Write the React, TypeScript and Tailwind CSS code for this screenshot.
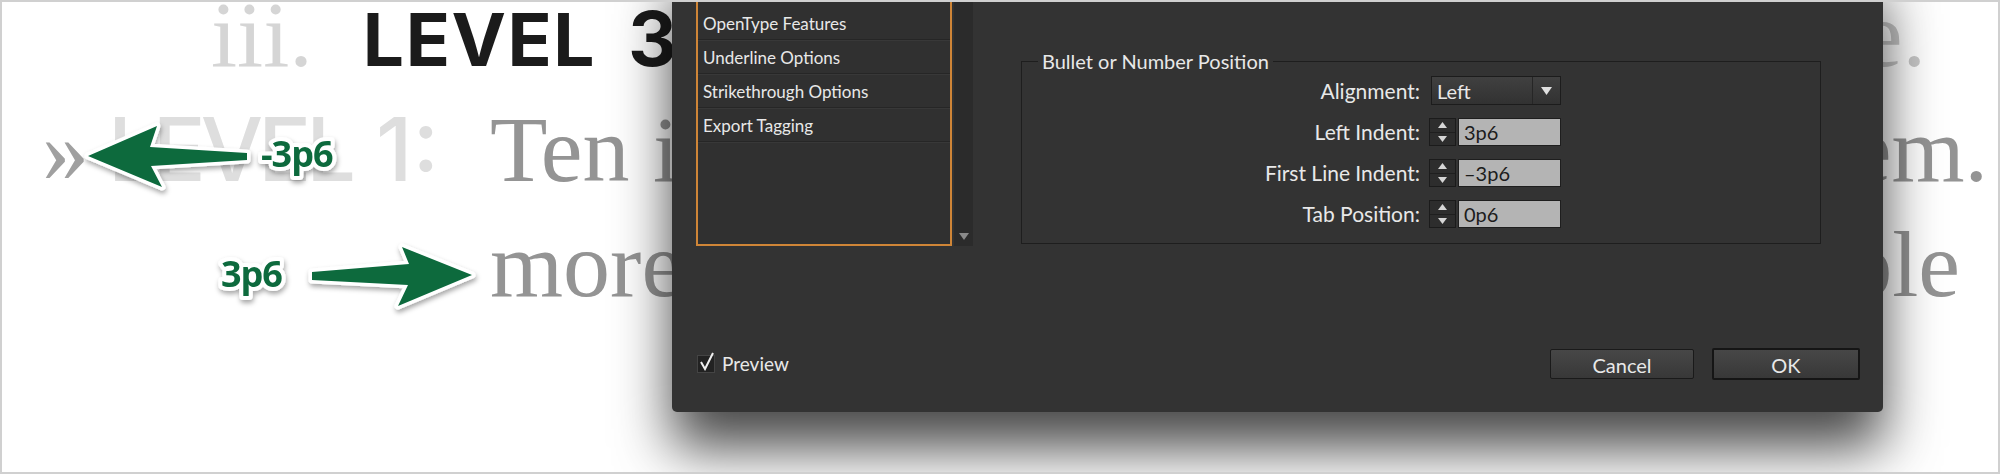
import React from "react";

const listItems = ["OpenType Features", "Underline Options", "Strikethrough Options", "Export Tagging"];

const fields = [
  { label: "Left Indent:", value: "3p6" },
  { label: "First Line Indent:", value: "\u20133p6" },
  { label: "Tab Position:", value: "0p6" },
];

const Spinner = () => (
  <div className="w-[27px] h-[28px] shrink-0 flex flex-col border border-[#1b1b1b] bg-[#2d2d2d]">
    <div className="flex-1 flex items-center justify-center border-b border-[#1f1f1f]">
      <svg width="9" height="6" viewBox="0 0 9 6">
        <path d="M4.5 0L9 6H0Z" fill="#d6d6d6" />
      </svg>
    </div>
    <div className="flex-1 flex items-center justify-center">
      <svg width="9" height="6" viewBox="0 0 9 6">
        <path d="M0 0H9L4.5 6Z" fill="#d6d6d6" />
      </svg>
    </div>
  </div>
);

const Arrows = () => (
  <svg className="absolute -left-[2px] -top-[2px] pointer-events-none" width="2000" height="474" viewBox="0 0 2000 474">
    <defs>
      <filter id="drop" x="-20%" y="-40%" width="140%" height="180%">
        <feDropShadow dx="1" dy="3" stdDeviation="2.5" floodColor="#000" floodOpacity="0.35" />
      </filter>
    </defs>
    <g filter="url(#drop)">
      <polygon
        points="88,156 157,126 150,147 247,153 247,160 151,166 162,187"
        fill="#0b6a3e"
        stroke="#fff"
        strokeWidth="7"
        strokeLinejoin="round"
        paintOrder="stroke"
      />
      <polygon
        points="472,275 402,247 409,264 312,272 312,280 408,285 398,306"
        fill="#0b6a3e"
        stroke="#fff"
        strokeWidth="7"
        strokeLinejoin="round"
        paintOrder="stroke"
      />
      <text
        x="261"
        y="167"
        fontFamily="'Open Sans', sans-serif"
        fontWeight="700"
        fontSize="36"
        letterSpacing="-1"
        fill="#0b6a3e"
        stroke="#fff"
        strokeWidth="8"
        strokeLinejoin="round"
        paintOrder="stroke"
      >
        -3p6
      </text>
      <text
        x="221"
        y="287"
        fontFamily="'Open Sans', sans-serif"
        fontWeight="700"
        fontSize="36"
        letterSpacing="-1"
        fill="#0b6a3e"
        stroke="#fff"
        strokeWidth="8"
        strokeLinejoin="round"
        paintOrder="stroke"
      >
        3p6
      </text>
    </g>
  </svg>
);

export default function App() {
  return (
    <div className="relative w-[2000px] h-[474px] overflow-hidden bg-white border-2 border-[#d0d0d0]">
      {/* page text behind the dialog */}
      <div className="-mt-[25px] font-['Liberation_Serif',serif] text-[94px] leading-[115px] whitespace-nowrap">
        <div className="flex items-baseline h-[115px] pl-[209px]">
          <span className="shrink-0 text-[#d5d5d5]">iii.</span>
          <span className="shrink-0 ml-[50px] font-['Inter',sans-serif] font-bold text-[73px] tracking-[1.5px] text-[#1b1b1b]">LEVEL</span>
          <span className="shrink-0 ml-[32px] font-['Inter',sans-serif] font-bold text-[76px] text-[#1b1b1b]">3</span>
          <span className="ml-auto mr-[72px] text-[#c8c8c8]">sentence.</span>
        </div>
        <div className="flex items-baseline h-[115px] pl-[40px]">
          <span className="shrink-0 w-[66px] text-[#a0a0a0]">»</span>
          <span className="shrink-0 w-[268px] font-['Inter',sans-serif] font-medium text-[88px] tracking-[-5px] text-[#dedede]">LEVEL</span>
          <span className="shrink-0 w-[114px] font-['Inter',sans-serif] font-medium text-[88px] text-[#dedede]">1:</span>
          <span className="shrink-0 text-[#949494]">Ten items is</span>
          <span className="ml-auto mr-[10px] text-[#949494]">system.</span>
        </div>
        <div className="flex items-baseline h-[115px] pl-[488px]">
          <span className="shrink-0 text-[#949494]">more than</span>
          <span className="ml-auto mr-[38px] text-[#949494]">possible</span>
        </div>
      </div>

      <Arrows />

      {/* dialog */}
      <div className="absolute left-[670px] -top-[42px] w-[1211px] h-[452px] flex flex-col rounded-b-[5px] bg-[#333333] shadow-[0_36px_55px_rgba(0,0,0,0.72)] font-['Lato',sans-serif] text-[20px] text-[#e8e8e8]">
        <div className="flex items-start pl-[24px]">
          <div className="w-[256px] h-[286px] shrink-0 border-2 border-[#cf8537] bg-[#303030] pt-[44px] text-[17px]">
            {listItems.map((item) => (
              <div key={item} className="h-[34px] pl-[5px] pt-[2px] leading-[32px] border-b border-[#262626] shadow-[0_1px_0_#383838]">
                {item}
              </div>
            ))}
          </div>
          <div className="w-[19px] h-[286px] ml-[2px] shrink-0 flex items-end justify-center pb-[6px] bg-[#2b2b2b]">
            <svg width="10" height="7" viewBox="0 0 10 7">
              <path d="M0 0H10L5 7Z" fill="#8a8a8a" />
            </svg>
          </div>

          <fieldset className="ml-[48px] mt-[90px] w-[800px] h-[194px] shrink-0 border border-[#1e1e1e]">
            <legend className="ml-[16px] px-[4px] leading-[22px] text-[#e8e8e8]">Bullet or Number Position</legend>
            <div className="flex flex-col items-end gap-[13px] pt-[4px] pr-[259px] text-[21px]">
              <div className="flex items-center h-[29px]">
                <span className="mr-[11px]">Alignment:</span>
                <div className="w-[130px] h-[29px] flex items-center border border-[#1c1c1c] bg-gradient-to-b from-[#404040] to-[#323232] text-[20px]">
                  <span className="flex-1 pl-[5px]">Left</span>
                  <div className="w-[28px] h-full flex items-center justify-center border-l border-[#262626]">
                    <svg width="11" height="8" viewBox="0 0 11 8">
                      <path d="M0 0H11L5.5 8Z" fill="#e0e0e0" />
                    </svg>
                  </div>
                </div>
              </div>
              {fields.map((f) => (
                <div key={f.label} className="flex items-center h-[28px]">
                  <span className="mr-[9px]">{f.label}</span>
                  <Spinner />
                  <div className="ml-[2px] w-[103px] h-[28px] pl-[5px] leading-[26px] border border-[#1e1e1e] bg-[#b4b4b4] text-[#1c1c1c] text-[20px]">
                    {f.value}
                  </div>
                </div>
              ))}
            </div>
          </fieldset>
        </div>

        <div className="mt-auto flex items-center pl-[25px] pr-[23px] pb-[32px]">
          <div className="relative w-[18px] h-[18px] border border-[#444444] bg-[#222222]">
            <svg className="absolute -top-[5px] left-[1px]" width="16" height="20" viewBox="0 0 16 20">
              <path d="M2 11L6 18L14 2" fill="none" stroke="#f0f0f0" strokeWidth="2" />
            </svg>
          </div>
          <span className="ml-[7px] text-[19px]">Preview</span>
          <button className="ml-auto w-[144px] h-[30px] rounded-[2px] border border-[#1a1a1a] bg-gradient-to-b from-[#474747] to-[#383838] text-[#e8e8e8]">
            Cancel
          </button>
          <button className="ml-[18px] w-[148px] h-[32px] rounded-[2px] border-2 border-[#151515] bg-gradient-to-b from-[#474747] to-[#383838] text-[#e8e8e8]">
            OK
          </button>
        </div>
      </div>
    </div>
  );
}
